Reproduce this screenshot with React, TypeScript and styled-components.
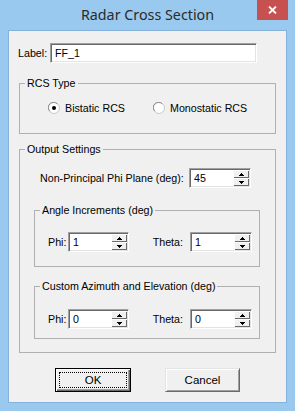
import * as React from "react"
import styled, { createGlobalStyle } from "styled-components"

const GlobalStyle = createGlobalStyle`
    html, body {
        margin: 0;
        padding: 0;
        background: #ffffff;
    }
    body {
        font-family: "Liberation Sans", Arial, sans-serif;
        font-size: 10.7px;
        color: #000000;
    }
`

const Window = styled.div`
    width: 295px;
    height: 411px;
    box-sizing: border-box;
    background: #99c9ef;
    display: flex;
    flex-direction: column;
`

const TitleBar = styled.div`
    height: 30px;
    flex: none;
    display: grid;
    grid-template-columns: 1fr auto 1fr;
    align-items: start;
`

const Title = styled.div`
    grid-column: 2;
    padding-top: 6px;
    font-family: "Noto Sans", "Open Sans", sans-serif;
    font-size: 14.3px;
    line-height: 18px;
    color: #2b2b2b;
`

const CloseButton = styled.div`
    grid-column: 3;
    justify-self: end;
    width: 31px;
    height: 20px;
    margin-right: 7px;
    background: #c75050;
    display: flex;
    align-items: center;
    justify-content: center;
`

const Client = styled.div`
    flex: 1;
    margin: 0 8px 8px;
    background: #f0f0f0;
    border: 1px solid #86b1db;
    display: flex;
    flex-direction: column;
`

const LabelRow = styled.div`
    margin-top: 12px;
    padding-left: 9px;
    display: flex;
    align-items: center;
`

const Caption = styled.span<{ $width?: number; $right?: boolean }>`
    width: ${(p) => (p.$width ? `${p.$width}px` : "auto")};
    flex: none;
    white-space: nowrap;
    text-align: ${(p) => (p.$right ? "right" : "left")};
    padding-right: ${(p) => (p.$right ? "7px" : "0")};
    box-sizing: border-box;
    line-height: 14px;
`

const Edit = styled.div<{ $width: number }>`
    width: ${(p) => p.$width}px;
    height: 20px;
    box-sizing: border-box;
    flex: none;
    display: flex;
    align-items: center;
    background: #ffffff;
    border-style: solid;
    border-width: 1px;
    border-color: #a0a0a0 #ffffff #ffffff #a0a0a0;
    box-shadow: inset 1px 1px 0 #696969, inset -1px -1px 0 #e3e3e3;
    padding-left: 4px;
    line-height: 14px;
`

const EditValue = styled.span`
    flex: 1;
    white-space: nowrap;
`

const SpinColumn = styled.div`
    width: 16px;
    margin-right: 1px;
    display: flex;
    flex-direction: column;
`

const SpinButton = styled.div`
    height: 8px;
    box-sizing: border-box;
    background: #f0f0f0;
    box-shadow: inset 1px 1px 0 #ffffff, inset -1px -1px 0 #696969;
    display: flex;
    align-items: center;
    justify-content: center;
`

const Group = styled.fieldset<{ $top: number; $padTop: number; $padBottom: number; $inner?: boolean }>`
    margin: ${(p) => p.$top}px ${(p) => (p.$inner ? "15px" : "10px")} 0 ${(p) => (p.$inner ? "14px" : "10px")};
    padding: ${(p) => p.$padTop}px 0 ${(p) => p.$padBottom}px;
    border: 1px solid #b0b0b0;
    min-inline-size: 0;
`

const GroupTitle = styled.legend`
    margin-left: 5px;
    padding: 0 2px;
    line-height: 14px;
`

const RadioRow = styled.div`
    padding-left: 28px;
    display: grid;
    grid-template-columns: 105px auto;
    align-items: center;
`

const RadioOption = styled.label`
    display: flex;
    align-items: center;
    gap: 5px;
    line-height: 14px;
    white-space: nowrap;
`

const FieldRow = styled.div<{ $indent: number }>`
    padding-left: ${(p) => p.$indent}px;
    display: flex;
    align-items: center;
`

const ButtonRow = styled.div`
    margin-top: 15px;
    padding-left: 46px;
    display: flex;
    gap: 34px;
`

const PushButton = styled.div<{ $width: number; $default?: boolean }>`
    width: ${(p) => p.$width}px;
    height: 24px;
    box-sizing: border-box;
    background: #f0f0f0;
    border: 1px solid ${(p) => (p.$default ? "#000000" : "#e3e3e3")};
    border-right-color: ${(p) => (p.$default ? "#000000" : "#696969")};
    border-bottom-color: ${(p) => (p.$default ? "#000000" : "#696969")};
    box-shadow: ${(p) =>
        p.$default
            ? "inset 1px 1px 0 #ffffff, inset -1px -1px 0 #696969, inset -2px -2px 0 #a0a0a0"
            : "inset 1px 1px 0 #ffffff, inset -1px -1px 0 #a0a0a0"};
    padding: 3px;
    display: flex;
`

const ButtonFace = styled.span<{ $focused?: boolean }>`
    flex: 1;
    display: flex;
    align-items: center;
    justify-content: center;
    border: 1px dotted ${(p) => (p.$focused ? "#000000" : "transparent")};
    font-size: 11.5px;
`

const Radio = ({ checked }: { checked?: boolean }) => (
    <svg width="12" height="12" viewBox="0 0 12 12">
        <circle cx="6" cy="6" r="5.5" fill="#ffffff" stroke="#c8c8c8" />
        <path d="M1.8 9.2 A5 5 0 0 1 9.2 1.8" fill="none" stroke="#8c8c8c" />
        {checked && <circle cx="6" cy="6" r="2" fill="#000000" />}
    </svg>
)

const Arrow = ({ down }: { down?: boolean }) => (
    <svg width="5" height="3" viewBox="0 0 5 3">
        {down ? (
            <>
                <rect x="0" y="0" width="5" height="1" fill="#000" />
                <rect x="1" y="1" width="3" height="1" fill="#000" />
                <rect x="2" y="2" width="1" height="1" fill="#000" />
            </>
        ) : (
            <>
                <rect x="2" y="0" width="1" height="1" fill="#000" />
                <rect x="1" y="1" width="3" height="1" fill="#000" />
                <rect x="0" y="2" width="5" height="1" fill="#000" />
            </>
        )}
    </svg>
)

const SpinEdit = ({ value, width }: { value: string; width: number }) => (
    <Edit $width={width}>
        <EditValue>{value}</EditValue>
        <SpinColumn>
            <SpinButton>
                <Arrow />
            </SpinButton>
            <SpinButton>
                <Arrow down />
            </SpinButton>
        </SpinColumn>
    </Edit>
)

const PhiThetaRow = ({ phi, theta }: { phi: string; theta: string }) => (
    <FieldRow $indent={13}>
        <Caption $width={20}>Phi:</Caption>
        <SpinEdit value={phi} width={61} />
        <Caption $width={61} $right>
            Theta:
        </Caption>
        <SpinEdit value={theta} width={62} />
    </FieldRow>
)

export default function App() {
    return (
        <>
            <GlobalStyle />
            <Window>
                <TitleBar>
                    <Title>Radar Cross Section</Title>
                    <CloseButton>
                        <svg width="9" height="8" viewBox="0 0 9 8">
                            <path d="M1 0.5 L8 7.5 M8 0.5 L1 7.5" stroke="#ffffff" strokeWidth="1.8" />
                        </svg>
                    </CloseButton>
                </TitleBar>
                <Client>
                    <LabelRow>
                        <Caption $width={32}>Label:</Caption>
                        <Edit $width={207}>
                            <EditValue>FF_1</EditValue>
                        </Edit>
                    </LabelRow>

                    <Group $top={13} $padTop={11} $padBottom={18}>
                        <GroupTitle>RCS Type</GroupTitle>
                        <RadioRow>
                            <RadioOption>
                                <Radio checked />
                                Bistatic RCS
                            </RadioOption>
                            <RadioOption>
                                <Radio />
                                Monostatic RCS
                            </RadioOption>
                        </RadioRow>
                    </Group>

                    <Group $top={8} $padTop={12} $padBottom={13}>
                        <GroupTitle>Output Settings</GroupTitle>
                        <FieldRow $indent={20}>
                            <Caption $width={149}>Non-Principal Phi Plane (deg):</Caption>
                            <SpinEdit value="45" width={62} />
                        </FieldRow>

                        <Group $inner $top={15} $padTop={15} $padBottom={14}>
                            <GroupTitle>Angle Increments (deg)</GroupTitle>
                            <PhiThetaRow phi="1" theta="1" />
                        </Group>

                        <Group $inner $top={12} $padTop={16} $padBottom={9}>
                            <GroupTitle>Custom Azimuth and Elevation (deg)</GroupTitle>
                            <PhiThetaRow phi="0" theta="0" />
                        </Group>
                    </Group>

                    <ButtonRow>
                        <PushButton $width={76} $default>
                            <ButtonFace $focused>OK</ButtonFace>
                        </PushButton>
                        <PushButton $width={75}>
                            <ButtonFace>Cancel</ButtonFace>
                        </PushButton>
                    </ButtonRow>
                </Client>
            </Window>
        </>
    )
}
